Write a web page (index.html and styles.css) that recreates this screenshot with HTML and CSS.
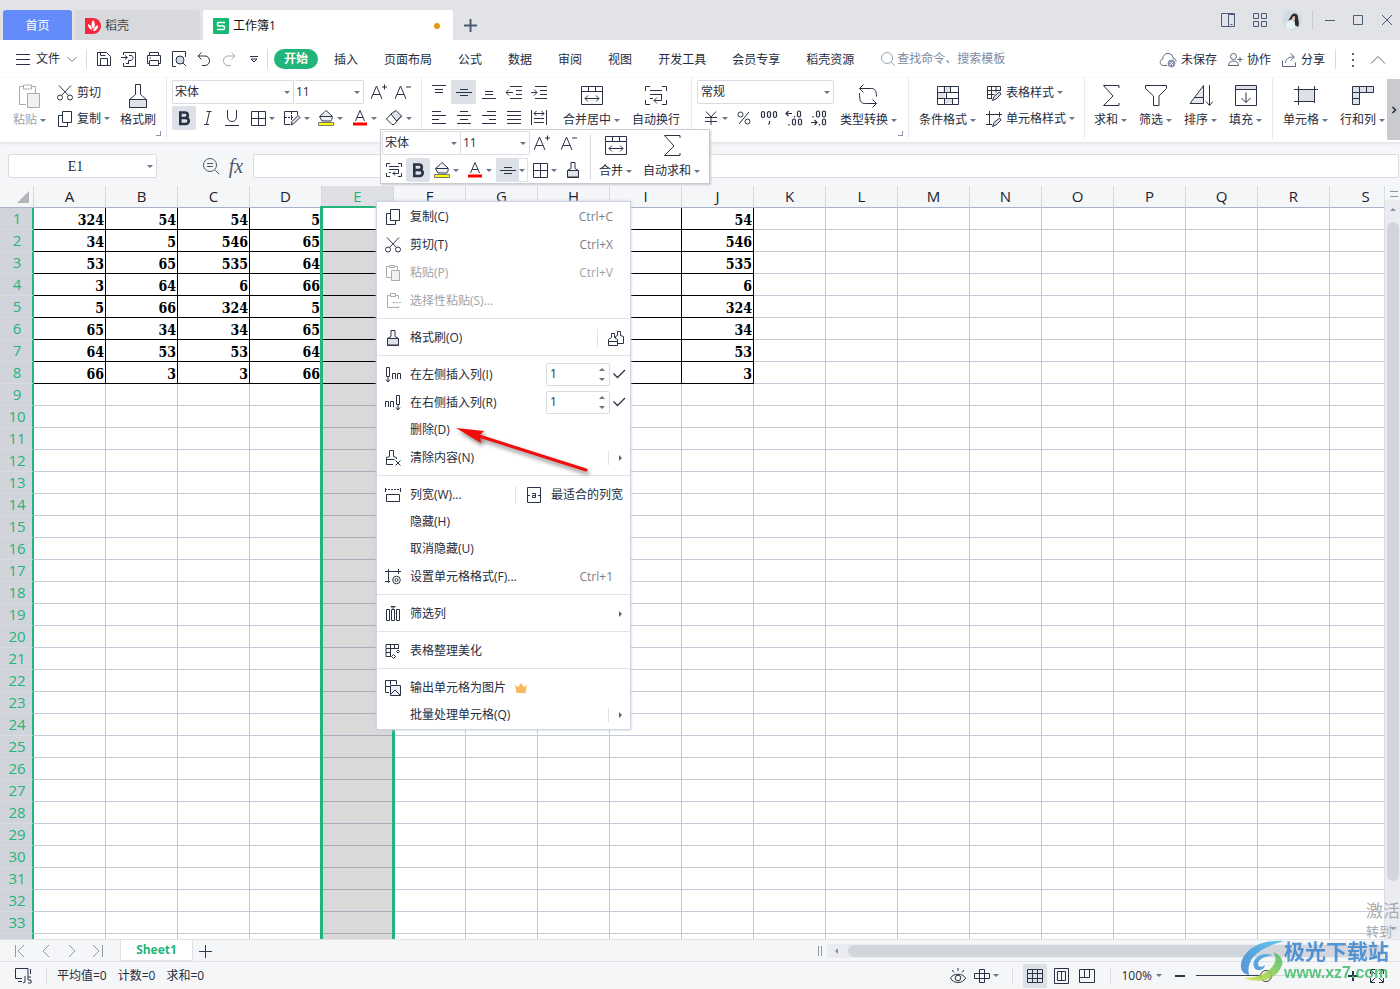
FILE: index.html
```html
<!DOCTYPE html>
<html lang="zh-CN">
<head>
<meta charset="utf-8">
<title>工作簿1</title>
<link rel="stylesheet" href="styles.css">
</head>
<body>
<svg class="defs" aria-hidden="true">
  <symbol id="menu" viewBox="0 0 16 16"><path d="M1 3.500h14M1 8.500h14M1 13.500h14"/></symbol>
  <symbol id="chev-down" viewBox="0 0 10 10"><path d="M.5 3l4.500 4.500L9.500 3"/></symbol>
  <symbol id="chev-up" viewBox="0 0 16 16"><path d="M1 11.500l7-7 7 7"/></symbol>
  <symbol id="save" viewBox="0 0 16 16"><path d="M1.500 14.500v-13h9l4 4v9zM4.500 14.500v-7h7v7M4.500 1.500v3h5"/></symbol>
  <symbol id="export" viewBox="0 0 16 16"><path d="M2.500 4V1.500h12v14h-12V12M0 6.500h6M4 4.500l2.500 2-2.500 2M7.500 12V9.500M7.500 9.500h1.500c4 0 4-5 1-5H8M5 12.500h3"/></symbol>
  <symbol id="print" viewBox="0 0 16 16"><path d="M3.500 4.500v-3h9v3M3.500 12.500h-2v-8h13v8h-2M3.500 9.500h9v5h-9zM3.500 7h1.500"/></symbol>
  <symbol id="preview" viewBox="0 0 16 16"><path d="M5 15.500H1.500V.5h13V6M12 12l3 3"/><circle cx="9" cy="9" r="4" fill="#d5d8e0"/></symbol>
  <symbol id="undo" viewBox="0 0 16 16"><path d="M5.500 1.500L2 5l3.500 3.500M2 5h7c6 0 6 9.500 0 9.500H6"/></symbol>
  <symbol id="redo" viewBox="0 0 16 16"><path d="M10.500 1.500L14 5l-3.500 3.500M14 5H7c-6 0-6 9.500 0 9.500h3"/></symbol>
  <symbol id="more" viewBox="0 0 10 10"><path d="M1 2.500h8M2 5h6L5 8z"/></symbol>
  <symbol id="search" viewBox="0 0 16 16"><circle cx="7" cy="7" r="5.500"/><path d="M11 11l4 4"/></symbol>
  <symbol id="zoomout" viewBox="0 0 18 18"><circle cx="8" cy="8" r="6.500"/><path d="M13 13l4 4M5 6.500h6M5 9.500h6"/></symbol>
  <symbol id="cloud" viewBox="0 0 18 16"><path d="M8 13.500H4.500c-4 0-4.500-5.500-.8-6.500C4 3 6.500 1.500 9 1.500s5 1.500 5.300 5c2 .3 3 1.500 2.700 3"/><circle cx="12.500" cy="11.500" r="3.500" fill="#8b95ad" stroke="#8b95ad"/><path stroke="#fff" d="M11 10l3 3M14 10l-3 3"/></symbol>
  <symbol id="people" viewBox="0 0 16 16"><circle cx="6.500" cy="4.500" r="3"/><path d="M1.500 13.500c0-6 10-6 10 0zM10.500 7.500h5M13 5v5"/></symbol>
  <symbol id="share" viewBox="0 0 16 16"><path d="M1.500 8.500v6h13v-4M4.500 11c0-4 3-6 8-6M9.500 1.500L13.500 5l-4 3.500"/></symbol>
  <symbol id="paste" viewBox="0 0 24 24"><path d="M8 20.500H1.500V2.500H5M14 2.500h3.500V9M5.500 1h8v4h-8z"/><path fill="#f0f1f3" d="M9.500 9.500h12v14h-12z"/></symbol>
  <symbol id="cut" viewBox="0 0 16 16"><circle cx="3" cy="12.500" r="2.500"/><circle cx="13" cy="12.500" r="2.500"/><path d="M2 .5l9.500 10M14 .5l-9.500 10"/></symbol>
  <symbol id="copy" viewBox="0 0 16 16"><path d="M5.500.5h9v11h-9zM5.500 4.500h-4v11h9v-4"/></symbol>
  <symbol id="brush" viewBox="0 0 24 24"><path d="M3.500 23.500v-8l6-5v-10h5v10l6 5v8z"/><path fill="#dfe1e8" d="M3.500 15.500h17v8h-17z"/></symbol>
  <symbol id="brush-s" viewBox="0 0 16 16"><path d="M2.500 8.500l3.500-2V.5h4v6l3.500 2v7h-11z"/><path fill="#dfe1e8" d="M2.500 8.500h11v6.500h-11z"/></symbol>
  <symbol id="a-plus" viewBox="0 0 16 16"><path d="M0 15L5.500 2 11 15M2 10.500h7M11 3h5M13.500.5v5"/></symbol>
  <symbol id="a-minus" viewBox="0 0 16 16"><path d="M0 15L5.500 2 11 15M2 10.500h7M11 3h5"/></symbol>
  <symbol id="bold" viewBox="0 0 16 16"><path stroke-width="2.600" d="M4.300 2.500h4.500c4 0 4 5.500 0 5.500H4.300zM4.300 8h5.200c4.300 0 4.300 6 0 6H4.300z"/></symbol>
  <symbol id="italic" viewBox="0 0 16 16"><path d="M6.500 1.500h5M4 14.500h5M9.500 1.500l-3 13"/></symbol>
  <symbol id="underline" viewBox="0 0 16 16"><path d="M3.500 0v7c0 6 9 6 9 0V0M1 15.500h14"/></symbol>
  <symbol id="borders" viewBox="0 0 16 16"><path d="M1.500 1.500h14v14h-14zM8.500 1.500v14M1.500 8.500h14"/></symbol>
  <symbol id="draw-border" viewBox="0 0 18 16"><path d="M14.500 5V1.500h-13v13H7"/><path stroke-dasharray="2 1" d="M8.500 2v8M2 7.500h9"/><path fill="#dfe1e8" d="M8 15l1-3.500L15 5.500l2 2-6 6z"/></symbol>
  <symbol id="fill" viewBox="0 0 16 16"><path fill="#f0f1f4" d="M6 2.500L8 .5l6 5.500c1 2-1 5-1 5H4L1.500 6.500zM2 6.500h12"/><path fill="#ff0" stroke="#777" d="M.5 12.500h15v3H.5z"/></symbol>
  <symbol id="font-color" viewBox="0 0 16 16"><path d="M3.500 11L8 .5 12.500 11M5 7.500h6"/><path fill="red" stroke="none" d="M1 12.500h14v3H1z"/></symbol>
  <symbol id="eraser" viewBox="0 0 18 16"><path fill="#dfe1e8" d="M6 4l5-3.500 5.500 5.500-5 5z"/><path d="M6 4L1.500 9 7 14.500h2l7.500-8.500"/></symbol>
  <symbol id="al-top" viewBox="0 0 16 16"><path d="M1 1.500h14M4 5.500h8M4 8.500h8"/></symbol>
  <symbol id="al-mid" viewBox="0 0 16 16"><path d="M4 5.500h8M0 8.500h16M4 11.500h8"/></symbol>
  <symbol id="al-bot" viewBox="0 0 16 16"><path d="M4 7.500h8M4 10.500h8M1 14.500h14"/></symbol>
  <symbol id="outdent" viewBox="0 0 16 16"><path d="M4 2.500h12M10 6.500h6M10 10.500h6M4 14.500h12M0 8.500h7M3 5.500l-3 3 3 3"/></symbol>
  <symbol id="indent" viewBox="0 0 16 16"><path d="M4 2.500h12M9 6.500h7M9 10.500h7M4 14.500h12M0 8.500h6M3 5.500l3 3-3 3"/></symbol>
  <symbol id="al-left" viewBox="0 0 16 16"><path d="M1 1.500h9M1 5.500h14M1 9.500h7M1 13.500h14"/></symbol>
  <symbol id="al-center" viewBox="0 0 16 16"><path d="M4 1.500h8M1 5.500h14M4 9.500h8M1 13.500h14"/></symbol>
  <symbol id="al-right" viewBox="0 0 16 16"><path d="M6 1.500h9M1 5.500h14M8 9.500h7M1 13.500h14"/></symbol>
  <symbol id="justify" viewBox="0 0 16 16"><path d="M1 1.500h14M1 5.500h14M1 9.500h14M1 13.500h14"/></symbol>
  <symbol id="distrib" viewBox="0 0 16 16"><path d="M.5 0v15M15.500 0v15M3 3.500h10M5.500 1L3 3.500 5.500 6M10.500 1L13 3.500 10.500 6M3 8.500h10M3 12.500h10"/></symbol>
  <symbol id="merge" viewBox="0 0 24 24"><path d="M1.500 2.500h21v18h-21zM1.500 7.500h21M8.500 2.500v5M15.500 2.500v5M5 14.500h14M8 11.500l-3 3 3 3M16 11.500l3 3-3 3"/></symbol>
  <symbol id="wrap" viewBox="0 0 24 24"><path d="M6 2.500H1.500V7M18 2.500h4.500V7M6 20.500H1.500V16M18 20.500h4.500V16M6 6.500h12M6 10.500h12M6 14.500h3M17.500 10.500v6H10M13 13.500l-3 3 3 3"/></symbol>
  <symbol id="yen" viewBox="0 0 16 16"><path d="M3 1.500L8 7l5-5.500M2 7.500h12M2 11.500h12M8 7v8"/></symbol>
  <symbol id="percent" viewBox="0 0 16 16"><circle cx="4.500" cy="4.500" r="2.500"/><circle cx="11.500" cy="11.500" r="2.500"/><path d="M13 2L3 14"/></symbol>
  <symbol id="thousand" viewBox="0 0 18 16"><path stroke-width="1.200" d="M1.500 2.500q1.500-2 3 0v4q-1.500 2-3 0zM7.500 2.500q1.500-2 3 0v4q-1.500 2-3 0zM13.500 2.500q1.500-2 3 0v4q-1.500 2-3 0zM9.500 11v2l-1 1.500"/></symbol>
  <symbol id="dec-inc" viewBox="0 0 18 16"><path stroke-width="1.200" d="M1 3.500h6M3.500 1L1 3.500 3.500 6M9.500 6v1.500M12.500 2q1.500-2 3 0v4q-1.500 2-3 0zM4 14v1.500M7.500 10q1.500-2 3 0v4q-1.500 2-3 0zM13.500 10q1.500-2 3 0v4q-1.500 2-3 0z"/></symbol>
  <symbol id="dec-dec" viewBox="0 0 18 16"><path stroke-width="1.200" d="M3 6v1.500M6.500 2q1.500-2 3 0v4q-1.500 2-3 0zM12.500 2q1.500-2 3 0v4q-1.500 2-3 0zM1 12.500h6M4.500 10L7 12.500 4.500 15M9.500 14v1.500M12.500 10q1.500-2 3 0v4q-1.500 2-3 0z"/></symbol>
  <symbol id="convert" viewBox="0 0 24 24"><path d="M6.500.5L2.500 4.500l4 4M2.500 4.500h12c4 0 5 3 5 8M2.500 9c0 8 1 10.500 6 10.500h11M15.500 15.500l4 4-4 4"/></symbol>
  <symbol id="cond" viewBox="0 0 24 24"><path fill="#dfe1e8" stroke="none" d="M7 3h8v5H7zM2 8h7v6H2zM9 14h8v5H9z"/><path d="M1.500 2.500h21v18h-21zM1.500 8.500h21M1.500 14.500h21M8.500 2.500v6M14.500 2.500v6M10.500 8.500v6M8.500 14.500v6M16.500 14.500v6"/></symbol>
  <symbol id="tbl-style" viewBox="0 0 16 16"><path d="M14.500 6V1.500H1.500v12H6M1.500 5.500h13M1.500 9.500h7M5.500 1.500v12M10 1.500v6"/><path fill="#dfe1e8" d="M6.500 15.500l1.500-4 5.500-4.500 1.500 2-5 5z"/></symbol>
  <symbol id="cell-style" viewBox="0 0 16 16"><path d="M0 3.500h16M3.500 0v13.500M0 13.500h6M13.500 1v5"/><path fill="#dfe1e8" d="M6.500 15.500l1.500-4 5.500-4.500 1.500 2-5 5z"/></symbol>
  <symbol id="sigma" viewBox="0 0 24 24"><path d="M20 4V1.500H4.500L14 12l-9.500 9.500H20V19"/></symbol>
  <symbol id="funnel" viewBox="0 0 24 24"><path d="M1.500 1.500h21v3L15 12v9.500H9.500V12l-8-7.500z"/></symbol>
  <symbol id="sort" viewBox="0 0 24 24"><path fill="#e6e7ec" d="M1 19.500L14.500 1.500v18zM5.500 13.500h9"/><path d="M20.500 1v20M17 17.500l3.500 4 3.500-4"/></symbol>
  <symbol id="fill-down" viewBox="0 0 24 24"><path fill="#dfe1e8" d="M1.500 1.500h21v4h-21z"/><path d="M1.500 5.500h21v16h-21zM12 8.500v10M7.500 14l4.500 4.500 4.500-4.500"/></symbol>
  <symbol id="cell" viewBox="0 0 24 24"><path fill="#dfe1e8" d="M4.500 5.500h16v12h-16z"/><path d="M0 5.500h24M0 17.500h18M4.500 2v19M20.500 2v13M20.500 16v3"/></symbol>
  <symbol id="rowcol" viewBox="0 0 24 24"><path fill="#dfe1e8" d="M1.500 2.500h21v6h-14v12h-7z"/><path d="M8.500 2.500v6h-7M15.500 2.500v6M1.500 14.500h7"/></symbol>
  <symbol id="wrap-s" viewBox="0 0 16 16"><path d="M4 1.500H.5V5M12 1.500h3.500V5M4 14.500H.5V11M12 14.500h3.500V11M3 4.500h10M3 7.500h10M12.500 7.500v4H7M9 9.500l-2 2 2 2M3 10.500h2"/></symbol>
  <symbol id="paste-s" viewBox="0 0 16 16"><path d="M6 12.500H1.500v-11H4M10 1.500h2.500V5M4.500.5h5v2h-5z"/><path fill="#f0f1f3" d="M6.500 5.500h8v10h-8z"/></symbol>
  <symbol id="paste-sp" viewBox="0 0 16 16"><path d="M5 2.500H2.500v12h11V13M11 2.500h2.500V6M5.500.5h5v3h-5zM8 9.500h2M11 9.500h2M14 9.500h2"/></symbol>
  <symbol id="brush-m" viewBox="0 0 18 18"><path fill="#fff" d="M8.500 14.500v-7l2-1v-4h3v4l3 1v7z"/><path fill="#fff" d="M1.500 16.500v-6l3-2v-4h3v4l3 2v6zM1.500 12.500h9"/></symbol>
  <symbol id="ins-left" viewBox="0 0 16 16"><path d="M1.500.5h3v9h-3zM3 10v5M1 12.500l2 2.500 2-2.500M7.500 12V6.500h3V12M12.500 12V6.500h3V12"/></symbol>
  <symbol id="ins-right" viewBox="0 0 16 16"><path d="M11.500.5h3v9h-3zM13 10v5M11 12.500l2 2.500 2-2.500M.5 12V6.500h3V12M5.500 12V6.500h3V12"/></symbol>
  <symbol id="clear" viewBox="0 0 16 16"><path d="M8 14.500H1.500v-7l3-1v-6h4v6l3 1V9M1.500 9.500h8M10.500 10.500l5 5M15.500 10.500l-5 5"/></symbol>
  <symbol id="col-w" viewBox="0 0 16 16"><path d="M1.500 7.500h13v7h-13z"/><path stroke-dasharray="2 1" d="M0 2.500h16"/><path d="M.5 1v4M15.500 1v4"/></symbol>
  <symbol id="fit" viewBox="0 0 16 16"><path d="M1.500.5h13v15h-13zM2 8.500h2M12 8.500h2M6 6.500h3.500v4H6.500v-2h3"/></symbol>
  <symbol id="fmt" viewBox="0 0 16 16"><path d="M0 2.500h16M3.500 0v14M0 12.500h5M13.500 0v5"/><circle cx="11.500" cy="11" r="3.800"/><circle cx="11.500" cy="11" r="1.500"/></symbol>
  <symbol id="filt-col" viewBox="0 0 16 16"><path d="M1.500 3.500h3v11h-3zM6.500 3.500h3v11h-3zM11.500 3.500h3v11h-3zM6 .5h4l-2 2z"/></symbol>
  <symbol id="beauty" viewBox="0 0 16 16"><path d="M13.500 6V1.500H1v12h5M1 5.500h13M1 9.500h5M5.500 1.500v12M9.500 1.500v4M13 7l1.500 1.500L13 10l-1.500-1.500zM8.500 11.500l2 2-2 2-2-2z"/></symbol>
  <symbol id="out-img" viewBox="0 0 16 16"><path d="M4 12.500H.5V.5h11v4M.5 6.500h5M5.500.5v4"/><path fill="#eef0f4" d="M5.500 5.500h10v10h-10z"/><path d="M6 14l4-4 5 5"/></symbol>
  <symbol id="first" viewBox="0 0 16 16"><path d="M3.500 2v12M12 2L6 8l6 6"/></symbol>
  <symbol id="prev" viewBox="0 0 16 16"><path d="M11 2L5 8l6 6"/></symbol>
  <symbol id="next" viewBox="0 0 16 16"><path d="M5 2l6 6-6 6"/></symbol>
  <symbol id="last" viewBox="0 0 16 16"><path d="M12.500 2v12M3 2l6 6-6 6"/></symbol>
  <symbol id="plus" viewBox="0 0 14 14"><path d="M1 7.500h13M7.500 1v13"/></symbol>
  <symbol id="js" viewBox="0 0 18 16"><path d="M13 9V.5H.5v10H7M3 13.500h4M15.500 1v5M10 8v6l-2 1M16 9h-3v3h3v3h-3"/></symbol>
  <symbol id="eye" viewBox="0 0 16 16"><path d="M.5 10C3 5 13 5 15.500 10 13 16 3 16 .5 10zM8 0v3M2 2l2 2.500M14 2l-2 2.500"/><circle cx="8" cy="10" r="2.800"/></symbol>
  <symbol id="cross" viewBox="0 0 16 16"><path d="M5.500 1.500h5v13h-5zM.5 5.500h15v5H.5z"/></symbol>
  <symbol id="grid" viewBox="0 0 16 16"><path d="M.5 1.500h15v13H.5zM.5 5.500h15M.5 10.500h15M5.500 1.500v13M10.500 1.500v13"/></symbol>
  <symbol id="book" viewBox="0 0 16 16"><path d="M1.500.5h14v15h-14zM4.500 3.500h8v9h-8zM8.500 3.500v9"/></symbol>
  <symbol id="layout" viewBox="0 0 16 16"><path d="M.5 1.500h15v13H.5zM5.500 1.500v8M10.500 1.500v8M.5 9.500h10"/></symbol>
  <symbol id="full" viewBox="0 0 16 16"><path d="M1.500 6V1.500H6M10 1.500h4.500V6M1.500 10v4.500H6M10 14.500h4.500V10M2 2l4 4M14 2l-4 4M2 14l4-4M14 14l-4-4"/></symbol>
  <symbol id="panel" viewBox="0 0 16 16"><path d="M1.500 1.500h13v13h-13zM8.500 14.500v-12h6M10.500 12.500h2"/></symbol>
  <symbol id="apps" viewBox="0 0 16 16"><path d="M1.500 1.500h5v5h-5zM9.500 1.500h5v5h-5zM1.500 9.500h5v5h-5zM9.500 9.500h5v5h-5z"/></symbol>
  <symbol id="check" viewBox="0 0 14 14"><path stroke-width="1.300" d="M1.500 6.500l4 4L13 3"/></symbol>
</svg>

<header class="titlebar">
  <nav class="tabs">
    <button class="tab home">首页</button>
    <button class="tab docer"><svg class="logo" viewBox="0 0 16 16"><path fill="#f5283c" stroke="none" d="M0 0h8a8 8 0 010 16H0z"/><path fill="#fff" stroke="none" d="M8 2c3 3 2 7 0 9-2-3-2-6 0-9zM3 6c3 1 4 3 4 6-3-1-4-3-4-6zM13 7c0 4-2 6-5 6 1-3 2-5 5-6z"/></svg>稻壳</button>
    <button class="tab book"><svg class="logo" viewBox="0 0 16 16"><rect width="16" height="16" rx="1" fill="#18b873" stroke="none"/><path stroke="#fff" stroke-width="1.400" d="M12 4.500H5.500q-1 0-1 1V7q0 1 1 1h5q1 0 1 1v1.500q0 1-1 1H4"/></svg>工作簿1<i class="dot"></i></button>
  </nav>
  <button class="ib newtab" aria-label="新建"><svg class="i14 thick"><use href="#plus"/></svg></button>
  <div class="winctl">
    <button class="ib" aria-label="面板"><svg class="i16"><use href="#panel"/></svg></button>
    <button class="ib" aria-label="应用"><svg class="i16"><use href="#apps"/></svg></button>
    <svg class="avatar" viewBox="0 0 20 20"><circle cx="10" cy="10" r="10" fill="#cfdde2" stroke="none"/><path fill="#2c2a33" stroke="none" d="M9 6c2-4 7-3 7 1 0 3 2 6 0 10l-3-2c0-3 0-5-2-6-2 0-4 1-5 2 1-2 2-3 3-5z"/><path fill="#e9c3b8" stroke="none" d="M10 7l3-1v4l-2 1z"/><path fill="#e6f1f4" stroke="none" d="M4 13l6-3 3 4v4c-4 2-7 1-9-1z"/></svg>
    <i class="vsep"></i>
    <button class="ib min" aria-label="最小化"><svg class="i12" viewBox="0 0 12 12"><path d="M1 6.500h10"/></svg></button>
    <button class="ib" aria-label="最大化"><svg class="i12" viewBox="0 0 12 12"><path d="M1.500 1.500h9v9h-9z"/></svg></button>
    <button class="ib" aria-label="关闭"><svg class="i12" viewBox="0 0 12 12"><path d="M1 1l10 10M11 1L1 11"/></svg></button>
  </div>
</header>

<div class="menubar">
  <button class="file"><svg class="i16"><use href="#menu"/></svg>文件<svg class="i10 dim"><use href="#chev-down"/></svg></button>
  <i class="vsep"></i>
  <div class="quick">
    <button class="ib" aria-label="保存"><svg class="i16"><use href="#save"/></svg></button>
    <button class="ib" aria-label="输出为PDF"><svg class="i16"><use href="#export"/></svg></button>
    <button class="ib" aria-label="打印"><svg class="i16"><use href="#print"/></svg></button>
    <button class="ib" aria-label="打印预览"><svg class="i16"><use href="#preview"/></svg></button>
    <button class="ib" aria-label="撤销"><svg class="i16"><use href="#undo"/></svg></button>
    <button class="ib off" aria-label="恢复"><svg class="i16"><use href="#redo"/></svg></button>
    <button class="ib" aria-label="更多"><svg class="i10"><use href="#more"/></svg></button>
  </div>
  <i class="vsep"></i>
  <nav class="ribbon-tabs">
    <button class="on">开始</button><button>插入</button><button>页面布局</button><button>公式</button><button>数据</button><button>审阅</button><button>视图</button><button>开发工具</button><button>会员专享</button><button>稻壳资源</button>
  </nav>
  <label class="find"><svg class="i16"><use href="#search"/></svg><input type="text" placeholder="查找命令、搜索模板"></label>
  <div class="share">
    <button><svg class="i18"><use href="#cloud"/></svg>未保存</button>
    <button><svg class="i16"><use href="#people"/></svg>协作</button>
    <button><svg class="i16"><use href="#share"/></svg>分享</button>
    <i class="vsep"></i>
    <button aria-label="更多选项" class="dots"><i></i><i></i><i></i></button>
    <button aria-label="收起功能区"><svg class="i16 dim"><use href="#chev-up"/></svg></button>
  </div>
</div>

<div class="ribbon">
  <section class="group g-clip">
    <button class="big off"><svg class="i24"><use href="#paste"/></svg><span class="dd">粘贴</span></button>
    <div class="stack">
      <button class="line"><svg class="i16"><use href="#cut"/></svg><span>剪切</span></button>
      <button class="line"><svg class="i16"><use href="#copy"/></svg><span class="dd">复制</span></button>
    </div>
    <button class="big"><svg class="i24"><use href="#brush"/></svg><span>格式刷</span></button>
    <i class="corner"></i>
  </section>
  <section class="group g-font">
    <div class="stack">
      <div class="row">
        <span class="combo fam"><select aria-label="字体"><option>宋体</option></select></span><span class="combo size"><select aria-label="字号"><option>11</option></select></span>
        <button class="t first" aria-label="增大字号"><svg class="i16"><use href="#a-plus"/></svg></button>
        <button class="t" aria-label="减小字号"><svg class="i16"><use href="#a-minus"/></svg></button>
      </div>
      <div class="row">
        <button class="t on" aria-label="加粗"><svg class="i16"><use href="#bold"/></svg></button>
        <button class="t" aria-label="倾斜"><svg class="i16"><use href="#italic"/></svg></button>
        <button class="t" aria-label="下划线"><svg class="i16"><use href="#underline"/></svg></button>
        <button class="t dd" aria-label="边框"><svg class="i16"><use href="#borders"/></svg></button>
        <button class="t dd" aria-label="绘图边框"><svg class="i18"><use href="#draw-border"/></svg></button>
        <button class="t dd" aria-label="填充颜色"><svg class="i16"><use href="#fill"/></svg></button>
        <button class="t dd" aria-label="字体颜色"><svg class="i16"><use href="#font-color"/></svg></button>
        <button class="t dd" aria-label="清除"><svg class="i18"><use href="#eraser"/></svg></button>
      </div>
    </div>
  </section>
  <section class="group g-align">
    <div class="stack">
      <div class="row">
        <button class="t" aria-label="顶端对齐"><svg class="i16"><use href="#al-top"/></svg></button>
        <button class="t on" aria-label="垂直居中"><svg class="i16"><use href="#al-mid"/></svg></button>
        <button class="t" aria-label="底端对齐"><svg class="i16"><use href="#al-bot"/></svg></button>
        <button class="t" aria-label="减少缩进"><svg class="i16"><use href="#outdent"/></svg></button>
        <button class="t" aria-label="增加缩进"><svg class="i16"><use href="#indent"/></svg></button>
      </div>
      <div class="row">
        <button class="t" aria-label="左对齐"><svg class="i16"><use href="#al-left"/></svg></button>
        <button class="t" aria-label="水平居中"><svg class="i16"><use href="#al-center"/></svg></button>
        <button class="t" aria-label="右对齐"><svg class="i16"><use href="#al-right"/></svg></button>
        <button class="t" aria-label="两端对齐"><svg class="i16"><use href="#justify"/></svg></button>
        <button class="t" aria-label="分散对齐"><svg class="i16"><use href="#distrib"/></svg></button>
      </div>
    </div>
    <button class="big"><svg class="i24"><use href="#merge"/></svg><span class="dd">合并居中</span></button>
    <button class="big"><svg class="i24"><use href="#wrap"/></svg><span>自动换行</span></button>
  </section>
  <section class="group g-num">
    <div class="stack">
      <div class="row"><span class="combo fmt"><select aria-label="数字格式"><option>常规</option></select></span></div>
      <div class="row">
        <button class="t dd" aria-label="货币"><svg class="i16"><use href="#yen"/></svg></button>
        <button class="t" aria-label="百分比"><svg class="i16"><use href="#percent"/></svg></button>
        <button class="t" aria-label="千位分隔"><svg class="i18"><use href="#thousand"/></svg></button>
        <button class="t" aria-label="增加小数位"><svg class="i18"><use href="#dec-inc"/></svg></button>
        <button class="t" aria-label="减少小数位"><svg class="i18"><use href="#dec-dec"/></svg></button>
      </div>
    </div>
    <button class="big"><svg class="i24"><use href="#convert"/></svg><span class="dd">类型转换</span></button>
    <i class="corner"></i>
  </section>
  <section class="group g-style">
    <button class="big"><svg class="i24"><use href="#cond"/></svg><span class="dd">条件格式</span></button>
    <div class="stack">
      <button class="line"><svg class="i16"><use href="#tbl-style"/></svg><span class="dd">表格样式</span></button>
      <button class="line"><svg class="i16"><use href="#cell-style"/></svg><span class="dd">单元格样式</span></button>
    </div>
  </section>
  <section class="group g-edit">
    <button class="big"><svg class="i24"><use href="#sigma"/></svg><span class="dd">求和</span></button>
    <button class="big"><svg class="i24"><use href="#funnel"/></svg><span class="dd">筛选</span></button>
    <button class="big"><svg class="i24"><use href="#sort"/></svg><span class="dd">排序</span></button>
    <button class="big"><svg class="i24"><use href="#fill-down"/></svg><span class="dd">填充</span></button>
  </section>
  <section class="group g-cell">
    <button class="big"><svg class="i24"><use href="#cell"/></svg><span class="dd">单元格</span></button>
    <button class="big"><svg class="i24"><use href="#rowcol"/></svg><span class="dd">行和列</span></button>
  </section>
  <button class="scroll-right" aria-label="向右滚动"><svg class="i10" viewBox="0 0 10 10"><path stroke-width="1.600" d="M3.500 2l3 3-3 3"/></svg></button>
</div>

<div class="formula">
  <span class="combo name"><input type="text" value="E1" aria-label="名称框"></span>
  <button class="ib" aria-label="查找"><svg class="i18"><use href="#zoomout"/></svg></button>
  <button class="fx" aria-label="插入函数">fx</button>
  <input class="fbox" type="text" aria-label="编辑栏">
</div>

<main class="work">
  <div class="sheet">
    <table>
      <thead><tr id="cols"></tr></thead>
      <tbody id="rows"></tbody>
    </table>
    <div class="selection"></div>
  </div>
  <div class="vscroll"><i class="pane"></i><i class="up"></i><i class="thumb"></i><i class="down"></i></div>
</main>

<footer>
  <div class="sheetbar">
    <button class="ib" aria-label="第一张"><svg class="i16"><use href="#first"/></svg></button>
    <button class="ib" aria-label="上一张"><svg class="i16"><use href="#prev"/></svg></button>
    <button class="ib" aria-label="下一张"><svg class="i16"><use href="#next"/></svg></button>
    <button class="ib" aria-label="最后一张"><svg class="i16"><use href="#last"/></svg></button>
    <button class="stab">Sheet1</button>
    <button class="ib add" aria-label="新建工作表"><svg class="i14"><use href="#plus"/></svg></button>
    <div class="hscroll"><i class="grip"></i><div class="track"><i class="left"></i><i class="thumb"></i></div></div>
  </div>
  <div class="status">
    <button class="ib" aria-label="宏"><svg class="i18"><use href="#js"/></svg></button>
    <i class="vsep"></i>
    <p><span>平均值=0</span><span>计数=0</span><span>求和=0</span></p>
    <div class="view">
      <button class="t" aria-label="护眼模式"><svg class="i16"><use href="#eye"/></svg></button>
      <button class="t dd" aria-label="阅读模式"><svg class="i16"><use href="#cross"/></svg></button>
      <i class="vsep"></i>
      <button class="t on" aria-label="普通视图"><svg class="i16"><use href="#grid"/></svg></button>
      <button class="t" aria-label="分页预览"><svg class="i16"><use href="#book"/></svg></button>
      <button class="t" aria-label="页面布局"><svg class="i16"><use href="#layout"/></svg></button>
      <i class="vsep"></i>
      <button class="pct dd">100%</button>
      <button class="ib" aria-label="缩小"><svg class="i12 thick" viewBox="0 0 12 12"><path d="M1 6h10"/></svg></button>
      <input class="zoom" type="range" min="0" max="100" value="49" aria-label="缩放">
      <button class="ib" aria-label="放大"><svg class="i12 thick" viewBox="0 0 12 12"><path d="M1 6h10M6 1v10"/></svg></button>
      <button class="ib" aria-label="全屏"><svg class="i16"><use href="#full"/></svg></button>
    </div>
  </div>
</footer>

<div class="minibar">
  <div class="stack">
    <div class="row">
      <span class="combo fam"><select aria-label="浮动字体"><option>宋体</option></select></span><span class="combo size"><select aria-label="浮动字号"><option>11</option></select></span>
      <button class="t" aria-label="增大字号"><svg class="i16"><use href="#a-plus"/></svg></button>
      <button class="t" aria-label="减小字号"><svg class="i16"><use href="#a-minus"/></svg></button>
    </div>
    <div class="row">
      <button class="t" aria-label="换行"><svg class="i16"><use href="#wrap-s"/></svg></button>
      <button class="t on" aria-label="加粗"><svg class="i16"><use href="#bold"/></svg></button>
      <button class="t dd" aria-label="填充颜色"><svg class="i16"><use href="#fill"/></svg></button>
      <button class="t dd" aria-label="字体颜色"><svg class="i16"><use href="#font-color"/></svg></button>
      <button class="t dd align" aria-label="对齐"><svg class="i16"><use href="#al-mid"/></svg></button>
      <button class="t dd" aria-label="边框"><svg class="i16"><use href="#borders"/></svg></button>
      <button class="t" aria-label="格式刷"><svg class="i16"><use href="#brush-s"/></svg></button>
    </div>
  </div>
  <i class="vsep"></i>
  <button class="big"><svg class="i24"><use href="#merge"/></svg><span class="dd">合并</span></button>
  <button class="big"><svg class="i24"><use href="#sigma"/></svg><span class="dd">自动求和</span></button>
</div>

<ul class="ctx">
  <li><button class="cmd"><svg class="i16"><use href="#copy"/></svg><span>复制(C)</span><kbd>Ctrl+C</kbd></button></li>
  <li><button class="cmd"><svg class="i16"><use href="#cut"/></svg><span>剪切(T)</span><kbd>Ctrl+X</kbd></button></li>
  <li><button class="cmd off"><svg class="i16"><use href="#paste-s"/></svg><span>粘贴(P)</span><kbd>Ctrl+V</kbd></button></li>
  <li><button class="cmd off"><svg class="i16"><use href="#paste-sp"/></svg><span>选择性粘贴(S)...</span></button></li>
  <li class="sep"></li>
  <li><button class="cmd"><svg class="i16"><use href="#brush-s"/></svg><span>格式刷(O)</span></button><button class="side" aria-label="多次格式刷"><svg class="i18"><use href="#brush-m"/></svg></button></li>
  <li class="sep"></li>
  <li><button class="cmd"><svg class="i16"><use href="#ins-left"/></svg><span>在左侧插入列(I)</span></button><span class="spin"><input type="number" value="1" aria-label="左侧列数"></span><button class="ok" aria-label="确定"><svg class="i14"><use href="#check"/></svg></button></li>
  <li><button class="cmd"><svg class="i16"><use href="#ins-right"/></svg><span>在右侧插入列(R)</span></button><span class="spin"><input type="number" value="1" aria-label="右侧列数"></span><button class="ok" aria-label="确定"><svg class="i14"><use href="#check"/></svg></button></li>
  <li class="plain"><button class="cmd"><span>删除(D)</span></button></li>
  <li><button class="cmd"><svg class="i16"><use href="#clear"/></svg><span>清除内容(N)</span></button><i class="sub split"></i></li>
  <li class="sep"></li>
  <li><button class="cmd"><svg class="i16"><use href="#col-w"/></svg><span>列宽(W)...</span></button><button class="side fit"><svg class="i16"><use href="#fit"/></svg>最适合的列宽</button></li>
  <li class="plain"><button class="cmd"><span>隐藏(H)</span></button></li>
  <li class="plain"><button class="cmd"><span>取消隐藏(U)</span></button></li>
  <li><button class="cmd"><svg class="i16"><use href="#fmt"/></svg><span>设置单元格格式(F)...</span><kbd>Ctrl+1</kbd></button></li>
  <li class="sep"></li>
  <li><button class="cmd"><svg class="i16"><use href="#filt-col"/></svg><span>筛选列</span></button><i class="sub"></i></li>
  <li class="sep"></li>
  <li><button class="cmd"><svg class="i16"><use href="#beauty"/></svg><span>表格整理美化</span></button></li>
  <li class="sep"></li>
  <li><button class="cmd"><svg class="i16"><use href="#out-img"/></svg><span>输出单元格为图片</span><svg class="i12" viewBox="0 0 12 12"><path fill="#fbb863" stroke="none" d="M0 3l3 2 3-4 3 4 3-2-1.500 8h-9z"/></svg></button></li>
  <li class="plain"><button class="cmd"><span>批量处理单元格(Q)</span></button><i class="sub split"></i></li>
</ul>

<svg class="pointer" viewBox="0 0 150 60"><path fill="none" stroke="#f20d0d" stroke-width="3" stroke-linecap="round" d="M28 15L135 49"/><path fill="#f20d0d" stroke="none" d="M5 7l28 3-4 4 1 8z"/></svg>

<div class="activate"><b>激活</b><span>转到"</span></div>
<div class="brand">
  <svg viewBox="0 0 44 42">
    <defs><linearGradient id="bl" x1="0" y1="1" x2="1" y2="0"><stop offset="0" stop-color="#3c7fd0"/><stop offset="1" stop-color="#4ac3ee"/></linearGradient><linearGradient id="gr" x1="0" y1="1" x2="1" y2="0"><stop offset="0" stop-color="#d8e23c"/><stop offset="1" stop-color="#3fb86a"/></linearGradient></defs>
    <path fill="url(#bl)" stroke="none" d="M44 1C24-1 4 8 1 24c-1 7 3 10 8 11-3-14 6-26 35-34zM33 15c-12-4-22 4-19 12 2 5 10 4 11-2-3 3-7 2-7-1 0-5 8-8 15-9z"/>
    <path fill="url(#gr)" stroke="none" d="M33 12c4 5 3 12-3 17-6 6-16 9-26 9 15 6 33 2 38-13 2-6-3-11-9-13z"/>
  </svg>
  <div><strong>极光下载站</strong><em>www.xz7.com</em></div>
</div>
<script src="sheet.js"></script>
</body>
</html>
```
FILE: styles.css
```css
* { box-sizing: border-box; }
body {
  margin: 0; height: 100vh; display: flex; flex-direction: column; position: relative; overflow: hidden;
  font: 12px/16px "Open Sans", "Noto Sans CJK SC", sans-serif; color: #262c3d; background: #f5f6f8;
}
button, input, select { font: inherit; color: inherit; border: 0; background: none; padding: 0; margin: 0; outline: 0; }
button { display: flex; align-items: center; justify-content: center; white-space: nowrap; }
i { font-style: normal; }
svg { flex: none; fill: none; stroke: #2b3245; stroke-width: 1; }
.defs { position: absolute; width: 0; height: 0; }
.i10 { width: 10px; height: 10px; }
.i12 { width: 12px; height: 12px; }
.i14 { width: 14px; height: 14px; }
.i16 { width: 16px; height: 16px; }
.i18 { width: 18px; height: 16px; }
.i24 { width: 24px; height: 24px; }
.thick { stroke-width: 2; }
.dim { stroke: #70798c; }
.off { color: #a0a3aa; }
.off svg { stroke: #a9abb1; }
.vsep { width: 1px; height: 20px; background: #d9dbe1; flex: none; }
.ib { width: 24px; height: 24px; flex: none; }
.dd::after { content: ""; flex: none; width: 0; height: 0; margin-left: 3px; border: 3px solid transparent; border-top: 3px solid #69748c; border-bottom: 0; }
span.dd { display: flex; align-items: center; }

/* title bar */
.titlebar { height: 40px; flex: none; display: flex; align-items: flex-end; background: #e2e3e7; padding-left: 3px; }
.tabs { display: flex; gap: 3px; }
.tab { height: 30px; border-radius: 3px 3px 0 0; justify-content: flex-start; gap: 4px; padding-top: 1px; }
.tab.home { width: 69px; background: #638cfa; color: #fff; justify-content: center; }
.tab.docer { width: 125px; background: #d8d9dd; padding-left: 10px; color: #444; }
.tab.book { width: 250px; background: #fff; padding: 1px 13px 0 10px; color: #111; }
.logo { width: 16px; height: 16px; }
.dot { width: 6px; height: 6px; border-radius: 3px; background: #e6980f; margin-left: auto; }
.newtab { margin: 0 0 3px 5px; }
.newtab svg { stroke: #4c5a76; }
.winctl { margin-left: auto; height: 40px; display: flex; align-items: center; gap: 8px; padding-right: 1px; }
.winctl svg { stroke: #4c5a76; }
.winctl .vsep { background: #c8cad0; margin-left: 2px; }
.winctl .min { margin: 0 -4px 0 -3px; }
.winctl .ib:last-child { margin-left: -3px; }
.avatar { width: 20px; height: 20px; margin-left: 2px; }

/* menu bar */
.menubar { height: 38px; flex: none; display: flex; align-items: center; background: #fff; padding: 0 14px 0 15px; }
.file { gap: 5px; margin-right: 9px; }
.file .dim { margin-left: 2px; }
.quick { display: flex; gap: 1px; padding: 0 1px 0 5px; }
.quick + .vsep { margin-right: 6px; }
.ribbon-tabs { display: flex; }
.ribbon-tabs button { padding: 1px 13px 0; height: 20px; }
.ribbon-tabs .on { background: #22b57b; color: #fff; font-weight: 700; border-radius: 10px; padding: 0 10px; margin-right: 3px; }
.find { display: flex; align-items: center; gap: 1px; margin-left: 13px; color: #8089a0; }
.find svg { stroke: #9aa4b8; }
.find input { width: 130px; }
.find input::placeholder { color: #8089a0; opacity: 1; }
.share { display: flex; align-items: center; margin-left: auto; gap: 10px; }
.share button { gap: 4px; padding-top: 1px; }
.share svg { stroke: #596379; }
.share .dots { flex-direction: column; width: 14px; }
.dots i { width: 2px; height: 2px; background: #596379; }

/* ribbon */
.ribbon { height: 64px; flex: none; display: flex; background: #fff; box-shadow: 0 1px 3px #d8dae0; position: relative; }
.group { display: flex; align-items: flex-start; flex: none; height: 61px; border-right: 1px solid #e8e9ed; padding-top: 1px; position: relative; }
.stack { display: flex; flex-direction: column; }
.row { display: flex; height: 26px; align-items: center; }
.big { flex-direction: column; flex: none; }
.big svg { margin: 5px 0 4px; }
.line { height: 26px; gap: 4px; justify-content: flex-start; padding-top: 1px; }
.t { width: 25px; height: 24px; flex: none; }
.t.dd { width: 34px; padding-left: 3px; }
.on { background: #dce1e7; border-radius: 2px; }
.corner { position: absolute; right: 5px; bottom: 3px; width: 5px; height: 5px; border: solid #8a93a8; border-width: 0 1px 1px 0; }
.g-clip { width: 167px; padding-left: 13px; gap: 9px; }
.g-clip .stack { width: 54px; margin-left: 2px; }
.g-font { width: 255px; padding-left: 5px; }
.g-font .t { width: 24px; }
.g-font .t.dd { width: 34px; }
.g-align { width: 270px; padding-left: 4px; gap: 12px; }
.g-num { width: 217px; padding-left: 5px; gap: 6px; }
.g-num .dd { padding-left: 2px; }
.g-num .big .dd { padding: 0; }
.g-style { width: 176px; padding-left: 10px; gap: 10px; }
.g-edit { width: 188px; padding-left: 9px; gap: 12px; }
.g-cell { flex: 1; padding-left: 10px; gap: 12px; border: 0; }
.scroll-right { width: 13px; height: 61px; margin-top: 1px; background: #c9cbd1; flex: none; }
.combo { position: relative; display: flex; height: 24px; border: 1px solid #dadce2; border-radius: 2px; background: #fff; flex: none; }
.combo::after { content: ""; position: absolute; right: 3px; top: 10px; border: 3px solid transparent; border-top-color: #69748c; border-bottom: 0; pointer-events: none; }
.combo select { appearance: none; width: 100%; padding: 0 14px 0 2px; }
.fam { width: 122px; border-radius: 2px 0 0 2px; }
.size { width: 70px; border-left: 0; }
.fmt { width: 137px; }
.fmt select { padding-left: 3px; }
.t.first { margin-left: 3px; }

/* formula bar */
.formula { height: 44px; flex: none; display: flex; align-items: center; padding: 4px 1px 0 8px; }
.name { width: 149px; margin-right: 42px; }
.name input { width: 100%; text-align: center; padding: 2px 14px 0 0; font: 14px "Liberation Serif", serif; }
.formula .i18 { height: 18px; stroke: #4d5568; }
.fx { width: 26px; font: italic 20px/20px "Liberation Serif", serif; color: #4d5568; margin-right: 4px; }
.fbox { flex: 1; height: 24px; border: 1px solid #dadce2; border-radius: 2px; background: #fff; }

/* sheet */
.work { flex: 1; min-height: 0; display: flex; background: #f5f6f8; }
.sheet { flex: 1; min-width: 0; overflow: hidden; position: relative; border-right: 1px solid #dcdee4; background: #fff; }
table { table-layout: fixed; border-collapse: separate; border-spacing: 0; width: 1402px; }
th, td { height: 22px; padding: 0; line-height: 18px; overflow: hidden; }
th { font-size: 15px; font-weight: 400; text-align: center; color: #1c2130; padding-bottom: 2px; }
thead th { width: 72px; background: #f5f6f8; border-bottom: 1px solid #a8b2cb; border-right: 1px solid #d3d7e1; }
thead th.pick { background: #dfe0e6; color: #22b57b; }
thead th:first-child { width: 34px; position: relative; }
thead th:first-child::after { content: ""; position: absolute; right: 4px; bottom: 4px; border: 6px solid #b4b5b8; border-top-color: transparent; border-left-color: transparent; }
tbody th { background: #d2d4dc; color: #22b57b; border-right: 2px solid #22b57b; border-bottom: 1px solid #d8dbe4; padding-left: 2px; }
td { border-right: 1px solid #c4cad8; border-bottom: 1px solid #c4cad8; text-align: right; padding: 2px 1px 0 0; font: 700 14px/18px "DejaVu Serif Condensed", "DejaVu Serif", serif; color: #000; }
td.boxed { border-color: #000; }
.selection { position: absolute; left: 320px; top: 20px; width: 75px; bottom: 0; border: solid #22b57b; border-width: 2px 3px 0; background: linear-gradient(transparent 22px, rgba(0, 0, 0, .15) 22px); }
.vscroll { width: 15px; display: flex; flex-direction: column; align-items: center; background: #ebecf1; }
.pane { align-self: stretch; height: 14px; background: #f5f6f8; flex: none; overflow: hidden; }
.pane::after { content: ""; display: block; margin: 5px 2px 0 5px; height: 4px; border: solid #8a93a8; border-width: 1px 0; }
.up, .down { flex: none; border: 3px solid transparent; }
.up { border-bottom-color: #8a93a8; margin: 5px 0 11px; }
.down { border-top-color: #8a93a8; margin: 0 0 6px; }
.vscroll .thumb { width: 12px; flex: 1; margin-bottom: 46px; border-radius: 6px; background: #d3d5dd; }

/* footer */
.sheetbar { height: 22px; display: flex; align-items: stretch; border-top: 1px solid #e0e2e8; padding-left: 8px; }
.sheetbar .ib { height: 21px; margin-right: 2px; }
.sheetbar .ib svg { stroke: #9599a2; }
.stab { width: 73px; margin-left: 8px; background: #fff; border: solid #e0e2e8; border-width: 0 1px 1px; color: #22b57b; font-weight: 700; }
.sheetbar .add svg { stroke: #323d55; }
.hscroll { margin-left: auto; width: 42%; display: flex; align-items: center; gap: 5px; padding: 0 16px 0 3px; }
.grip { width: 4px; height: 10px; border: solid #8a93a8; border-width: 0 1px; }
.track { flex: 1; height: 14px; background: #ebecf1; display: flex; align-items: center; }
.left { border: 3px solid transparent; border-right-color: #8a93a8; margin: 0 10px 0 5px; }
.hscroll .thumb { flex: 1; height: 12px; border-radius: 6px; background: #d3d5dd; }
.status { height: 28px; display: flex; align-items: center; border-top: 1px solid #e0e2e8; padding: 0 11px 0 12px; }
.status .vsep { height: 14px; margin: 0 10px; }
.status p { margin: 0; display: flex; gap: 11px; }
.view { margin-left: auto; display: flex; align-items: center; }
.view .t { margin-right: 1px; }
.view .t.dd { width: 31px; padding: 0; margin: 0; }
.view .on { width: 24px; }
.pct { margin-right: 6px; }
.pct.dd::after { margin-left: 4px; }
.zoom { appearance: none; width: 142px; height: 13px; margin: 0 3px 0 4px; background: linear-gradient(90deg, #323d55 49%, #d3d5dd 49%) center / 100% 1px no-repeat; }
.zoom::-webkit-slider-thumb { appearance: none; width: 12px; height: 12px; border-radius: 6px; border: 1px solid #444; background: #f5f6f8; }

/* floating toolbar */
.minibar { position: absolute; left: 380px; top: 129px; width: 330px; height: 55px; display: flex; align-items: flex-start; background: #fff; border: 1px solid #c9cbd1; box-shadow: 1px 1px 2px #c9cbd1; padding: 0 0 0 1px; }
.minibar .fam { width: 79px; }
.minibar .size { width: 69px; }
.minibar .row { height: 26px; }
.minibar .row + .row { height: 28px; }
.minibar .row .t { width: 24px; }
.minibar .row .size + .t { margin-right: 3px; }
.minibar .row .t.dd { width: 33px; padding: 0; }
.minibar .row .t.align { width: 32px; padding-left: 3px; justify-content: flex-start; background: linear-gradient(90deg, #dce1e7 22px, #fff 22px); border: 1px solid #dce1e7; }
.minibar > .vsep { height: 46px; margin: 4px 8px 0 2px; }
.minibar .stack { width: 206px; }
.minibar .big + .big { margin-left: 11px; }
.minibar .big svg { margin: 4px 0 5px; }

/* context menu */
.ctx { position: absolute; left: 376px; top: 201px; width: 255px; margin: 0; padding: 1px 0 0; list-style: none; background: #fff; border: 1px solid #cfd4e2; box-shadow: 0 0 3px #c8cddd; }
.ctx li { height: 28px; display: flex; align-items: center; }
.ctx .plain { height: 27px; padding-bottom: 2px; }
.ctx .plain .cmd { padding-left: 33px; }
.ctx .sep { height: 9px; padding-bottom: 2px; }
.ctx .sep::after { content: ""; flex: 1; height: 1px; background: #e0e2e8; }
.cmd { flex: 1; height: 100%; justify-content: flex-start; padding-left: 8px; gap: 9px; }
kbd { font: inherit; margin-left: auto; margin-right: 17px; color: #7b7e87; }
.off kbd { color: #a0a3aa; }
.side { height: 18px; border-left: 1px solid #dfe1e6; padding: 0 5px 0 9px; }
.fit { gap: 9px; padding: 0 7px 0 10px; }
.side .i18 { height: 18px; }
.spin { position: relative; width: 64px; height: 23px; margin-bottom: 2px; border: 1px solid #dadce2; border-radius: 2px; display: flex; }
.spin input { width: 100%; padding-left: 3px; appearance: textfield; }
.spin::before, .spin::after { content: ""; position: absolute; right: 4px; border: 3px solid transparent; }
.spin::before { top: 1px; border-bottom-color: #69748c; }
.spin::after { bottom: 1px; border-top-color: #69748c; }
.ok { margin: 0 4px 3px 2px; }
.sub { width: 22px; height: 14px; display: flex; align-items: center; justify-content: flex-end; padding-right: 5px; }
.sub::after { content: ""; border: 3px solid transparent; border-left-color: #596379; }
.split { border-left: 1px solid #dfe1e6; }
.pointer { position: absolute; left: 451px; top: 421px; width: 150px; height: 60px; filter: drop-shadow(2px 3px 2px rgba(0, 0, 0, .5)); pointer-events: none; }

/* overlays at the corner */
.activate { position: absolute; right: 0; bottom: 50px; color: #a9abaf; white-space: nowrap; pointer-events: none; }
.activate b { display: block; font-size: 17px; line-height: 24px; font-weight: 400; }
.activate span { display: block; font-size: 13px; line-height: 16px; }
.brand { position: absolute; right: 11px; bottom: 5px; display: flex; align-items: flex-start; opacity: .85; pointer-events: none; }
.brand svg { width: 44px; height: 42px; }
.brand strong { display: block; font-size: 21px; line-height: 22px; color: #3b86cf; font-weight: 700; }
.brand em { display: block; font: 700 16px/22px "Liberation Sans", sans-serif; color: #43bd6c; }
```
FILE: sheet.js
```js
const columns = "ABCDEFGHIJKLMNOPQRS".split("");
const values = {
  A: [324, 34, 53, 3, 5, 65, 64, 66],
  B: [54, 5, 65, 64, 66, 34, 53, 3],
  C: [54, 546, 535, 6, 324, 34, 53, 3],
  D: [5, 65, 64, 66, 5, 65, 64, 66],
  J: [54, 546, 535, 6, 324, 34, 53, 3]
};

const head = document.getElementById("cols");
head.append(document.createElement("th"));
columns.forEach(name => {
  const th = document.createElement("th");
  th.textContent = name;
  if (name === "E") th.className = "pick";
  head.append(th);
});

const body = document.getElementById("rows");
for (let r = 0; r < 34; r++) {
  const tr = document.createElement("tr");
  const th = document.createElement("th");
  if (r < 33) th.textContent = r + 1;
  tr.append(th);
  columns.forEach((name, c) => {
    const td = document.createElement("td");
    if (r < 8 && c < 10) td.className = "boxed";
    if (values[name] && r < 8) td.textContent = values[name][r];
    tr.append(td);
  });
  body.append(tr);
}
```
